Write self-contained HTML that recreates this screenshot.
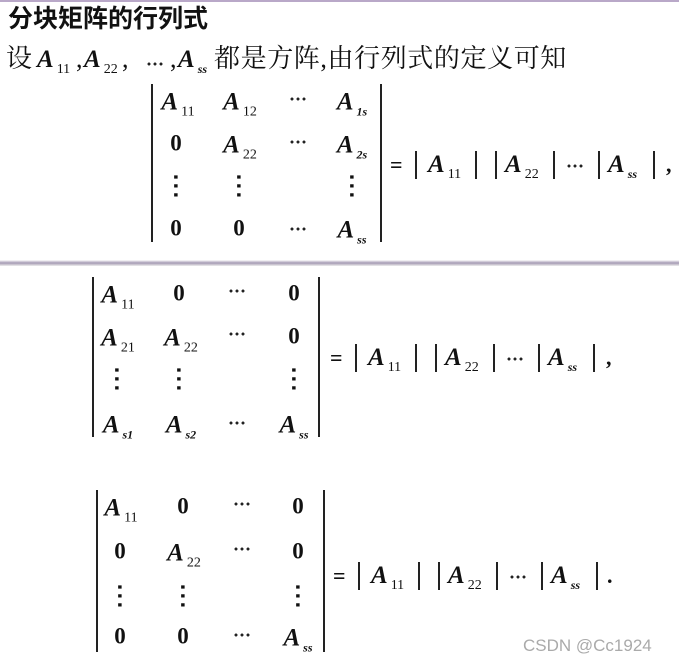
<!DOCTYPE html>
<html><head><meta charset="utf-8"><style>
body{margin:0;width:679px;height:664px;background:#fff;position:relative;overflow:hidden;font-family:"Liberation Serif","Noto Serif CJK SC",serif;color:#111}
.t{position:absolute;white-space:nowrap;line-height:1}
.c{position:absolute;transform:translate(-50%,-50%);white-space:nowrap;line-height:1;font-weight:bold;font-size:23px}
.a{font-style:italic;font-weight:bold;font-size:25px}
.s{font-size:14px;font-weight:normal;position:relative;top:6px;margin-left:3px}
.si{font-size:12px;font-style:italic;font-weight:bold;position:relative;top:6px;margin-left:3px}
.bar{position:absolute;width:1.5px;background:#222}
.d{font-family:"DejaVu Sans",sans-serif;font-size:26px;font-weight:normal;transform:translate(-50%,-50%) scaleX(1.3)}
.dt{position:absolute;width:18px;height:4px;background:radial-gradient(circle,#222 1.3px,transparent 1.7px) 0 0/6px 4px repeat-x;transform:translate(-50%,-50%)}
.rr{position:absolute;width:300px;height:30px}
.rr>*{position:absolute;line-height:1;white-space:nowrap}
.rr .vb{width:1.5px;height:28px;top:1px;background:#222}
.rr .eq{font-size:22px;font-weight:bold;top:4px}
.rr .x{top:2px}
.rr .dt{transform:none}
.sl{position:absolute;top:46px;font-size:26px;line-height:1;white-space:nowrap}
</style></head><body>
<div style="position:absolute;left:0;top:0;width:679px;height:2px;background:#b9a8c8"></div>
<div class="t" style="left:8px;top:7px;font-family:'Liberation Sans','Noto Sans CJK SC',sans-serif;font-weight:bold;font-size:25px">分块矩阵的行列式</div>
<span class="sl" style="left:6px">设</span>
<span class="sl" style="left:37px"><span class="a">A</span><span class="s">11</span></span>
<span class="sl" style="left:76px">,</span>
<span class="sl" style="left:84px"><span class="a">A</span><span class="s">22</span></span>
<span class="sl" style="left:122px">,</span>
<div class="dt" style="left:146px;top:62px;transform:none;width:18px"></div>
<span class="sl" style="left:170px">,</span>
<span class="sl" style="left:178px"><span class="a">A</span><span class="si">ss</span></span>
<span class="sl" style="left:214px;letter-spacing:0.6px">都是方阵,由行列式的定义可知</span>

<div style="position:absolute;left:0;top:260px;width:679px;height:6px;background:linear-gradient(#fff,#a59ab3 50%,#eee)"></div>

<!-- matrix 1 -->
<div class="bar" style="left:151px;top:84px;height:158px"></div>
<div class="bar" style="left:380px;top:84px;height:158px"></div>
<span class="c" style="left:178px;top:102px"><span class="a">A</span><span class="s">11</span></span>
<span class="c" style="left:240px;top:102px"><span class="a">A</span><span class="s">12</span></span>
<div class="dt" style="left:298px;top:99px"></div>
<span class="c" style="left:352px;top:102px"><span class="a">A</span><span class="si">1s</span></span>
<span class="c" style="left:176px;top:143px">0</span>
<span class="c" style="left:240px;top:145px"><span class="a">A</span><span class="s">22</span></span>
<div class="dt" style="left:298px;top:142px"></div>
<span class="c" style="left:352px;top:145px"><span class="a">A</span><span class="si">2s</span></span>
<span class="c d" style="left:176px;top:186px">⋮</span>
<span class="c d" style="left:239px;top:186px">⋮</span>
<span class="c d" style="left:352px;top:186px">⋮</span>
<span class="c" style="left:176px;top:228px">0</span>
<span class="c" style="left:239px;top:228px">0</span>
<div class="dt" style="left:298px;top:229px"></div>
<span class="c" style="left:352px;top:230px"><span class="a">A</span><span class="si">ss</span></span>

<div class="rr" style="left:390px;top:150px">
<span class="eq" style="left:0">=</span><span class="vb" style="left:25px"></span>
<span class="x" style="left:38px"><span class="a">A</span><span class="s">11</span></span><span class="vb" style="left:85px"></span>
<span class="vb" style="left:105px"></span><span class="x" style="left:115px"><span class="a">A</span><span class="s">22</span></span>
<span class="vb" style="left:163px"></span><span class="dt" style="left:176px;top:14px"></span>
<span class="vb" style="left:208px"></span><span class="x" style="left:218px"><span class="a">A</span><span class="si">ss</span></span>
<span class="vb" style="left:263px"></span><span class="eq" style="left:276px">,</span>
</div>

<!-- matrix 2 -->
<div class="bar" style="left:92px;top:277px;height:160px"></div>
<div class="bar" style="left:318px;top:277px;height:160px"></div>
<span class="c" style="left:118px;top:295px"><span class="a">A</span><span class="s">11</span></span>
<span class="c" style="left:179px;top:293px">0</span>
<div class="dt" style="left:237px;top:291px"></div>
<span class="c" style="left:294px;top:293px">0</span>
<span class="c" style="left:118px;top:338px"><span class="a">A</span><span class="s">21</span></span>
<span class="c" style="left:181px;top:338px"><span class="a">A</span><span class="s">22</span></span>
<div class="dt" style="left:237px;top:334px"></div>
<span class="c" style="left:294px;top:336px">0</span>
<span class="c d" style="left:117px;top:379px">⋮</span>
<span class="c d" style="left:179px;top:379px">⋮</span>
<span class="c d" style="left:294px;top:379px">⋮</span>
<span class="c" style="left:118px;top:425px"><span class="a">A</span><span class="si">s1</span></span>
<span class="c" style="left:181px;top:425px"><span class="a">A</span><span class="si">s2</span></span>
<div class="dt" style="left:237px;top:423px"></div>
<span class="c" style="left:294px;top:425px"><span class="a">A</span><span class="si">ss</span></span>

<div class="rr" style="left:330px;top:343px">
<span class="eq" style="left:0">=</span><span class="vb" style="left:25px"></span>
<span class="x" style="left:38px"><span class="a">A</span><span class="s">11</span></span><span class="vb" style="left:85px"></span>
<span class="vb" style="left:105px"></span><span class="x" style="left:115px"><span class="a">A</span><span class="s">22</span></span>
<span class="vb" style="left:163px"></span><span class="dt" style="left:176px;top:14px"></span>
<span class="vb" style="left:208px"></span><span class="x" style="left:218px"><span class="a">A</span><span class="si">ss</span></span>
<span class="vb" style="left:263px"></span><span class="eq" style="left:276px">,</span>
</div>

<!-- matrix 3 -->
<div class="bar" style="left:96px;top:490px;height:162px"></div>
<div class="bar" style="left:323px;top:490px;height:162px"></div>
<span class="c" style="left:121px;top:508px"><span class="a">A</span><span class="s">11</span></span>
<span class="c" style="left:183px;top:506px">0</span>
<div class="dt" style="left:242px;top:504px"></div>
<span class="c" style="left:298px;top:506px">0</span>
<span class="c" style="left:120px;top:551px">0</span>
<span class="c" style="left:184px;top:553px"><span class="a">A</span><span class="s">22</span></span>
<div class="dt" style="left:242px;top:549px"></div>
<span class="c" style="left:298px;top:551px">0</span>
<span class="c d" style="left:120px;top:596px">⋮</span>
<span class="c d" style="left:183px;top:596px">⋮</span>
<span class="c d" style="left:298px;top:596px">⋮</span>
<span class="c" style="left:120px;top:636px">0</span>
<span class="c" style="left:183px;top:636px">0</span>
<div class="dt" style="left:242px;top:635px"></div>
<span class="c" style="left:298px;top:638px"><span class="a">A</span><span class="si">ss</span></span>

<div class="rr" style="left:333px;top:561px">
<span class="eq" style="left:0">=</span><span class="vb" style="left:25px"></span>
<span class="x" style="left:38px"><span class="a">A</span><span class="s">11</span></span><span class="vb" style="left:85px"></span>
<span class="vb" style="left:105px"></span><span class="x" style="left:115px"><span class="a">A</span><span class="s">22</span></span>
<span class="vb" style="left:163px"></span><span class="dt" style="left:176px;top:14px"></span>
<span class="vb" style="left:208px"></span><span class="x" style="left:218px"><span class="a">A</span><span class="si">ss</span></span>
<span class="vb" style="left:263px"></span><span class="eq" style="left:274px">.</span>
</div>

<div class="t" style="left:523px;top:637px;font-family:'Liberation Sans',sans-serif;font-size:17px;color:#aaa">CSDN @Cc1924</div>
</body></html>
